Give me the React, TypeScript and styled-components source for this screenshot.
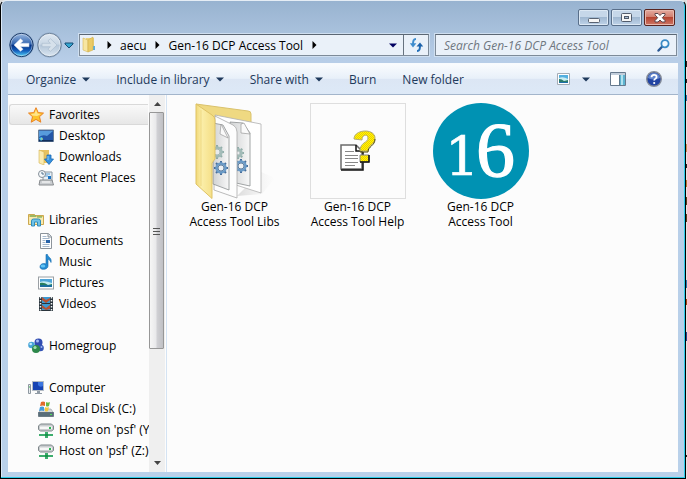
import React from "react";
import styled, { createGlobalStyle, css } from "styled-components";

const GlobalStyle = createGlobalStyle`
  *, *::before, *::after { box-sizing: border-box; }
  html, body, #root { height: 100%; }
  body { margin: 0; overflow: hidden; background: #dedede; }
  body, button, input { font-family: "Open Sans", "Noto Sans", sans-serif; font-size: 12px; }
  button { border: 0; padding: 0; margin: 0; background: none; color: inherit; }
  svg { display: block; flex: none; }
`;

/* ---------- window frame ---------- */

const Desktop = styled.div`
  height: 100%;
  display: grid;
  grid-template-columns: minmax(0, 1fr) 1px;
`;

const Backdrop = styled.div`
  background: linear-gradient(
    #e4e4e4 0 61px, #222 61px 67px, #e4e4e4 67px 79px, #222 79px 83px,
    #e4e4e4 83px 95px, #2b78ad 95px 101px, #e4e4e4 101px 144px, #c89455 144px 152px,
    #e4e4e4 152px 164px, #222 164px 168px, #e4e4e4 168px 180px, #b77c32 180px 187px,
    #e4e4e4 187px 197px, #54401a 197px 205px, #e4e4e4 205px 214px, #54401a 214px 222px,
    #e4e4e4 222px 280px, #2b78ad 280px 288px, #e4e4e4 288px 299px, #a34710 299px 305px,
    #e4e4e4 305px 332px, #24458c 332px 341px, #e4e4e4 341px 455px, #222 455px 457px, #e4e4e4 457px
  );
`;

const Frame = styled.main`
  min-width: 0;
  min-height: 0;
  display: flex;
  flex-direction: column;
  padding: 1px 7px 6px;
  border: 1px solid #000;
  border-top-color: #e5edf5;
  border-radius: 6px 6px 0 0;
  background: linear-gradient(#98b3d0, #b8cee8 60px, #b9d1ea);
  box-shadow: inset -1px -1px #2ccdea, inset 1px 0 #dbe9f7;
`;

const TitleBar = styled.header`
  height: 32px;
  display: flex;
  justify-content: flex-end;
  align-items: flex-start;
  gap: 2px;
  padding: 7px 3px 0;
`;

const Caption = styled.button<{ $danger?: boolean }>`
  width: 31px;
  height: 17px;
  display: grid;
  place-items: center;
  border: 1px solid #596f8a;
  border-radius: 2px;
  background: linear-gradient(#c6d7e9 0 45%, #a0b8d1 50%, #bfd3e9);
  box-shadow: inset 0 0 0 1px #dce8f4;
  ${(p) =>
    p.$danger &&
    css`
      border-color: #59241f;
      background: linear-gradient(#e4a99e 0, #d28071 45%, #b64431 50%, #ce7766);
      box-shadow: inset 0 0 0 1px #e9b9ae;
    `}
`;

const NavRow = styled.div`
  height: 29px;
  display: flex;
  align-items: flex-start;
  gap: 6px;
  padding-right: 1px;
`;

const History = styled.nav`
  width: 65px;
  height: 26px;
  margin-top: -2px;
  display: flex;
  align-items: center;
  gap: 1px;
`;

const RoundButton = styled.button`
  width: 27px;
  height: 26px;
`;

const SmallButton = styled.button`
  width: 12px;
  height: 24px;
  display: grid;
  place-items: center;
`;

const field = css`
  height: 22px;
  display: flex;
  align-items: center;
  background: #eaf1f9;
  border: 1px solid #7e8b99;
  border-top-color: #5b6774;
  box-shadow: 0 0 0 1px #cfdff0;
`;

const Address = styled.div`
  ${field}
  flex: 346 1 0;
  min-width: 0;
  padding-left: 2px;
`;

const Crumb = styled.button`
  height: 20px;
  white-space: nowrap;
  color: #000;
`;

const CrumbArrow = styled.span`
  width: 22px;
  display: grid;
  place-items: center;
`;

const HistoryDrop = styled.button`
  width: 20px;
  height: 20px;
  margin-left: auto;
  display: grid;
  place-items: center;
`;

const Refresh = styled.button`
  width: 25px;
  height: 20px;
  display: grid;
  place-items: center;
  border-left: 1px solid #66727f;
`;

const SearchBox = styled.label`
  ${field}
  flex: 226 1 0;
  min-width: 0;
  padding: 0 6px 0 8px;
`;

const SearchInput = styled.input`
  flex: 1;
  min-width: 0;
  border: 0;
  padding: 0;
  outline: 0;
  background: none;
  font-style: italic;
  &::placeholder { color: #6f7780; opacity: 1; }
`;

/* ---------- command bar ---------- */

const CommandBar = styled.div`
  height: 32px;
  flex: none;
  display: flex;
  align-items: center;
  gap: 26px;
  padding: 0 16px 0 18px;
  color: #1e395b;
  border-top: 1px solid #f8fbfe;
  border-bottom: 1px solid #a3b5cb;
  background: linear-gradient(#fafcfe, #e8f0f9 48%, #dce6f4 50%, #dde9f7);
`;

const Command = styled.button`
  display: flex;
  align-items: center;
  gap: 6px;
  white-space: nowrap;
`;

const ViewTools = styled.div`
  margin-left: auto;
  display: flex;
  align-items: center;
  gap: 20px;
`;

const ViewMode = styled(Command)`
  gap: 12px;
`;

/* ---------- body ---------- */

const Body = styled.div`
  flex: 1;
  min-height: 0;
  display: grid;
  grid-template-columns: 159px minmax(0, 1fr);
  grid-template-rows: minmax(0, 1fr);
  background: #fcfcfc;
`;

const Sidebar = styled.aside`
  min-height: 0;
  display: grid;
  grid-template-columns: minmax(0, 1fr) 16px;
  grid-template-rows: minmax(0, 1fr);
  padding-right: 1px;
  border-right: 1px solid #d4e3f3;
`;

const Tree = styled.nav`
  min-width: 0;
  overflow: hidden;
  padding: 9px 1px 0;
`;

const Group = styled.ul`
  list-style: none;
  margin: 0 0 21px;
  padding: 0;
`;

const Item = styled.a<{ $root?: boolean; $active?: boolean }>`
  height: 21px;
  display: flex;
  align-items: center;
  gap: 5px;
  padding-left: ${(p) => (p.$root ? 18 : 28)}px;
  border: 1px solid ${(p) => (p.$active ? "#d9d9d9" : "transparent")};
  border-right: 0;
  border-radius: 3px 0 0 3px;
  background: ${(p) => (p.$active ? "linear-gradient(#f9f9f9, #e7e7e7)" : "none")};
  color: #000;
  text-decoration: none;
  white-space: nowrap;
`;

const ScrollBar = styled.div`
  display: grid;
  grid-template-rows: 17px minmax(0, 236fr) minmax(0, 105fr) 17px;
  background: #efefef;
`;

const ScrollButton = styled.button`
  display: grid;
  place-items: center;
`;

const Thumb = styled.div`
  margin-right: 1px;
  display: grid;
  place-items: center;
  border: 1px solid #979797;
  border-radius: 1px;
  background: linear-gradient(90deg, #f6f6f6, #e9e9eb 45%, #d0d0d4 55%, #bfc0c4);
`;

const Files = styled.section`
  display: flex;
  flex-wrap: wrap;
  align-content: flex-start;
  gap: 20px;
  padding: 8px 16px;
`;

const Tile = styled.button`
  width: 103px;
  display: flex;
  flex-direction: column;
  align-items: center;
  color: #000;
  line-height: 15px;
  white-space: nowrap;
`;

const NameLine = styled.span`
  display: block;
  height: 15px;
`;

const Preview = styled.span<{ $framed?: boolean }>`
  width: 96px;
  height: 96px;
  display: grid;
  place-items: center;
  border: ${(p) => (p.$framed ? "1px solid #dedede" : "0")};
`;

/* ---------- drawings ---------- */

const Down = ({ fill = "#1e395b" }: { fill?: string }) => (
  <svg width="8" height="5" viewBox="0 0 8 5"><path d="M0 .5h8L4 4.5z" fill={fill} /></svg>
);
const Right = () => (
  <svg width="5" height="8" viewBox="0 0 5 8"><path d="M.5 0v8L4.5 4z" fill="#000" /></svg>
);

const Round = ({ forward }: { forward?: boolean }) => {
  const id = forward ? "forward" : "back";
  return (
    <svg width="27" height="26" viewBox="0 0 27 26">
      <defs>
        <linearGradient id={id} x2="0" y2="1">
          <stop stopColor={forward ? "#dfe9f2" : "#9bb9e1"} />
          <stop offset=".45" stopColor={forward ? "#c9d7e5" : "#3567b0"} />
          <stop offset=".52" stopColor={forward ? "#b6c8da" : "#063488"} />
          <stop offset=".75" stopColor={forward ? "#c6d5e4" : "#1560bd"} />
          <stop offset="1" stopColor={forward ? "#dbe7f2" : "#55d5fa"} />
        </linearGradient>
      </defs>
      <circle cx="13.5" cy="13" r="12.5" fill="#8ea8c6" />
      <circle cx="13.5" cy="13" r="11.6" fill={`url(#${id})`} stroke={forward ? "#6e8299" : "#173766"} />
      <circle cx="13.5" cy="13" r="10.7" fill="none" stroke="#fff" strokeOpacity=".4" />
      <path
        transform={forward ? "translate(27 0) scale(-1 1)" : undefined}
        d="M6 13l6.5-6.3 2.6 2.2-2.5 2.4H21v3.4h-8.4l2.5 2.5-2.6 2.1z"
        fill={forward ? "#d6e1eb" : "#fff"}
        stroke={forward ? "#a6b8cb" : "#c6d5eb"}
        strokeWidth=".6"
      />
    </svg>
  );
};

const Minimize = () => (
  <svg width="12" height="10" viewBox="0 0 12 10"><rect x=".5" y="5.5" width="11" height="4" rx="1" fill="#f6f6f6" stroke="#596372" /></svg>
);
const Maximize = () => (
  <svg width="11" height="10" viewBox="0 0 11 10">
    <rect x=".5" y=".5" width="10" height="8" rx="1" fill="#f6f6f6" stroke="#515b6b" />
    <rect x="3.5" y="3.5" width="4" height="2" fill="#a8bcd3" stroke="#515b6b" />
  </svg>
);
const Close = () => (
  <svg width="12" height="10" viewBox="0 0 12 10">
    <path d="M1 .5h3l2 2 2-2h3v1.4L8.3 4.7 11 7.6V9H8L6 7 4 9H1V7.6l2.7-2.9L1 1.9z" fill="#fff" stroke="#5c474d" />
  </svg>
);

const FolderSmall = () => (
  <svg width="16" height="18" viewBox="0 0 16 18">
    <path d="M4 2h8v12H4z" fill="#ead37c" /><path d="M11 10h2v4h-2z" fill="#55aee3" />
    <path d="M1 2l5 2v12l-5-2z" fill="#f7e6a2" stroke="#d6b758" strokeWidth=".6" />
    <path d="M6 4l5-3v13l-5 2z" fill="#eacb66" stroke="#d2b04d" strokeWidth=".6" />
  </svg>
);

const RefreshIcon = () => (
  <svg width="15" height="14" viewBox="0 0 15 14" fill="none" stroke="#236fb8">
    <path d="M7 1C4.500 1 4 2.500 4 7" strokeWidth="2" stroke="#3e8ccd" /><path d="M.8 5.200h6.600L4 9.400z" fill="#3e8ccd" stroke="none" />
    <path d="M8 13c2.500 0 3-1.500 3-6" strokeWidth="2" /><path d="M7.500 8.500h6.700L11 4.600z" fill="#1d62aa" stroke="none" />
  </svg>
);

const Magnifier = () => (
  <svg width="13" height="13" viewBox="0 0 13 13" fill="none">
    <path d="M1.500 11.500l4-4.300" stroke="#2b5994" strokeWidth="2.400" strokeLinecap="round" />
    <circle cx="8" cy="4.700" r="3.600" stroke="#398ac5" strokeWidth="1.800" fill="#f2f9fe" />
  </svg>
);

const PictureIcon = () => (
  <svg width="16" height="14" viewBox="0 0 16 14">
    <rect x=".5" y="1" width="15" height="12" fill="#fff" stroke="#9a9fa4" />
    <path d="M2 3h12v8H2z" fill="#4fa5d8" /><path d="M2 6q4-2 12 1v4H2z" fill="#c2ebef" />
    <path d="M2 7q4-1 8 2l4-1v3H2z" fill="#277d5b" /><path d="M2 9h12v2H2z" fill="#1b6e9d" />
  </svg>
);
const ViewIcon = () => (
  <svg width="13" height="12" viewBox="0 0 13 12">
    <path d="M.5.5h12v11H.5z" fill="#fff" stroke="#a4acb5" /><path d="M2 2h9v4H2z" fill="#53afe0" />
    <path d="M2 5q4-2 9 1v4H2z" fill="#c9edf2" /><path d="M2 6q3 0 5 2l4-1v3H2z" fill="#2b7b69" /><path d="M2 9h9v1H2z" fill="#1e6fab" />
  </svg>
);
const PaneIcon = () => (
  <svg width="16" height="14" viewBox="0 0 16 14">
    <path d="M.5.5h15v13H.5z" fill="#fff" stroke="#66798d" /><path d="M1 1h14v2H1z" fill="#c2cedb" />
    <path d="M10 3h5v10h-5z" fill="#5db3d0" /><path d="M11 3h2v10h-2z" fill="#b1e2ef" /><path d="M9.500 3v10" stroke="#5b798e" />
  </svg>
);
const HelpIcon = () => (
  <svg width="16" height="16" viewBox="0 0 16 16">
    <circle cx="8" cy="8" r="7.300" fill="#2143a2" stroke="#858c99" strokeWidth="1.400" />
    <path d="M2 7a6 5 0 0 1 12 0Q8 10 2 7z" fill="#6286cd" />
    <path d="M5.500 6.300C5.500 3 10.600 3 10.600 6c0 1.700-2.400 1.600-2.400 3.500" fill="none" stroke="#fff" strokeWidth="1.800" />
    <circle cx="8.200" cy="12" r="1.100" fill="#fff" />
  </svg>
);

const Star = () => (
  <svg width="16" height="16" viewBox="0 0 16 16">
    <path d="M8 .7l2.200 4.900 5.300.5-4 3.600 1.300 5.500L8 12.400l-4.800 2.800 1.300-5.500-4-3.600 5.300-.5z" fill="#fcc42c" stroke="#eb8224" />
    <path d="M8 2.500l1.500 4 3.500.5-4 2-5-.5-1-1.500 3.500-.5z" fill="#ffe58a" />
  </svg>
);
const DesktopIcon = () => (
  <svg width="16" height="14" viewBox="0 0 16 14">
    <path d="M.5 1h15v11.500H.5z" fill="#2356a8" stroke="#697f98" /><path d="M1 2h14L9 7Q5 5 1 8z" fill="#579bdc" />
    <path d="M1 11h14v1.500H1z" fill="#102e5c" /><path d="M1 9l3-1 1 2-2 2z" fill="#49c4ed" /><path d="M3 9l2 1-1 1z" fill="#f8da40" />
  </svg>
);
const DownloadsIcon = () => (
  <svg width="16" height="16" viewBox="0 0 16 16">
    <path d="M1 1h10v13H1z" fill="#e6c260" /><path d="M1 1l5 2v13l-5-2z" fill="#faebb0" stroke="#d5b152" strokeWidth=".6" />
    <path d="M9 6h4v4h2.500L11 15.500 6.500 10H9z" fill="#3792df" stroke="#1768b4" strokeWidth=".8" /><path d="M10 7v4" stroke="#8bd0fb" />
  </svg>
);
const RecentIcon = () => (
  <svg width="16" height="16" viewBox="0 0 16 16">
    <path d="M5 2h9v9H5z" fill="#e8f0f7" stroke="#8a969f" /><path d="M7 4h5M7 6h3" stroke="#5e9fd0" />
    <path d="M10 6h3v3h-3z" fill="#1d74c4" /><path d="M2 10h12l1.500 5H1z" fill="#cbced1" stroke="#878b8e" /><path d="M4 12h8" stroke="#fff" />
    <circle cx="4" cy="4" r="3.500" fill="#f3f7fa" stroke="#858f98" /><path d="M4 2v2h2" fill="none" stroke="#53738d" />
  </svg>
);
const LibrariesIcon = () => (
  <svg width="16" height="16" viewBox="0 0 16 16">
    <path d="M.5 2.500h6l1 1h8v9H.5z" fill="#e5c968" stroke="#cba851" /><path d="M1 5h14v7H1z" fill="#faeaad" />
    <path d="M2 4h6M9 5h5" stroke="#56a85c" /><path d="M3.500 14V9q0-2 2-2h5q2 0 2 2v5h-3v-4h-3v4z" fill="#70c2e8" stroke="#318dbb" />
  </svg>
);
const DocumentIcon = () => (
  <svg width="16" height="16" viewBox="0 0 16 16">
    <path d="M2.500.5h8l3 3v12h-11z" fill="#fff" stroke="#8d949b" /><path d="M10 .5v3.500h3.500" fill="#dae3ec" stroke="#8d949b" />
    <path d="M4.500 3.500h4M4.500 5.500h7M4.500 7.500h3M4.500 9.500h3M4.500 11.500h7M4.500 13.500h7" stroke="#a5b8cc" /><path d="M8 7h4v3H8z" fill="#2763a9" />
  </svg>
);
const MusicIcon = () => (
  <svg width="16" height="16" viewBox="0 0 16 16">
    <path d="M8 .5h1.500c.5 3 4.500 3 3.500 8-.8-2-1.700-3-3-3.300V12c0 4-8 4.500-8 1 0-3 3-4.200 6-3z" fill="#258bd2" stroke="#146aad" strokeWidth=".6" />
    <ellipse cx="5" cy="12" rx="2.300" ry="1.500" fill="#62c4f5" />
  </svg>
);
const VideoIcon = () => (
  <svg width="16" height="16" viewBox="0 0 16 16">
    <path d="M1 1h14v14H1z" fill="#29333b" /><path d="M4 1h8v6H4zM4 8h8v6H4z" fill="#3b99d3" />
    <path d="M4 1l4 3 4-2v2L8 7 4 4zM4 9l4 3 4-3v4l-4 1-4-2z" fill="#b65133" /><path d="M2.500 1v14M13.500 1v14" stroke="#eef2f4" strokeWidth="1.500" strokeDasharray="1.500 1.500" />
  </svg>
);
const HomegroupIcon = () => (
  <svg width="16" height="16" viewBox="0 0 16 16">
    <circle cx="10.500" cy="4.500" r="4" fill="#314cb1" /><circle cx="3.500" cy="7" r="3.300" fill="#45a4d7" />
    <circle cx="12.500" cy="10" r="3.300" fill="#3454b5" /><circle cx="8" cy="11" r="4" fill="#2d884a" />
    <circle cx="9.500" cy="3" r="1.500" fill="#a5bbf5" /><circle cx="2.700" cy="6" r="1.300" fill="#c1eafa" />
    <circle cx="7" cy="9.500" r="1.600" fill="#a0dfab" /><circle cx="13.500" cy="9" r="1" fill="#9fb4ee" />
  </svg>
);
const ComputerIcon = () => (
  <svg width="16" height="16" viewBox="0 0 16 16">
    <path d="M4.500 1.500h11v9h-11z" fill="#1743b3" stroke="#b3bbc3" /><path d="M10 2h5v4q-3 2-5-1z" fill="#3c75df" />
    <path d="M9 11h3v2h2v1H7v-1h2z" fill="#919ba5" /><path d="M.5 4.500h2v9h-2z" fill="#e9edf0" stroke="#8e98a0" /><path d="M1 7h1" stroke="#38b649" />
  </svg>
);
const DiskIcon = () => (
  <svg width="16" height="16" viewBox="0 0 16 16">
    <path d="M3 8h10l2.500 4H.5z" fill="#d4d8db" stroke="#949ba1" strokeWidth=".6" /><path d="M.5 11.500h15v4H.5z" fill="#596e7a" stroke="#425561" strokeWidth=".6" />
    <path d="M3 1q2-1 4 0v4Q5 4 2 5z" fill="#e16b2c" /><path d="M8 1q2 1 4 0l-1 4q-2 1-3 0z" fill="#68b944" />
    <path d="M2 6q2-1 4 0v4Q4 9 1 10z" fill="#439bda" /><path d="M7 6q2 1 4 0l-1 4q-2 1-3 0z" fill="#f3c73b" /><path d="M12 13.500h2" stroke="#50e05a" />
  </svg>
);
const NetworkDisk = () => (
  <svg width="16" height="16" viewBox="0 0 16 16">
    <path d="M.5 4l2-2h11l2 2v3.500l-2 1.500h-11l-2-1.500z" fill="#c9cdcf" stroke="#7f878b" /><path d="M2 4.500h12v2.500H2z" fill="#f6f7f7" />
    <path d="M11 6h2" stroke="#29b553" strokeWidth="2" /><path d="M7 10h3v2h5v2h-5v2H7v-2H1v-2h6z" fill="#3dad6d" /><path d="M7 12h3v2H7z" fill="#19914c" />
  </svg>
);

const gearTeeth = [0, 45, 90, 135, 180, 225, 270, 315];
const Gear = ({ x, y, r, faded }: { x: number; y: number; r: number; faded?: boolean }) => (
  <g transform={`translate(${x} ${y})`} opacity={faded ? 0.7 : 1}>
    {gearTeeth.map((a) => <path key={a} transform={`rotate(${a})`} d={`M-1 ${-r + 1}v-2h2v2z`} fill={faded ? "#6f9690" : "#486f9b"} />)}
    <circle r={r - 1.500} fill="none" stroke={faded ? "#86aaa5" : "#6a9bc7"} strokeWidth="2.500" />
    <circle r={r - 3} fill="#eef1f3" stroke={faded ? "#789994" : "#42688f"} strokeWidth=".8" />
  </g>
);

const FolderLarge = () => (
  <svg width="96" height="96" viewBox="0 0 96 96">
    <defs>
      <linearGradient id="flap"><stop stopColor="#f1d979" /><stop offset=".3" stopColor="#fbeea9" /><stop offset="1" stopColor="#f3dc80" /></linearGradient>
      <linearGradient id="sheet"><stop stopColor="#d0d2d3" /><stop offset="1" stopColor="#f8f8f8" /></linearGradient>
      <linearGradient id="shade"><stop stopColor="#bbb" stopOpacity=".5" /><stop offset="1" stopColor="#ddd" stopOpacity="0" /></linearGradient>
    </defs>
    <path d="M50 93l25-2 13-16-14-6z" fill="url(#shade)" />
    <path d="M9 1l52 7q3 0 3 3v9L28 16z" fill="#efd982" stroke="#dac26c" />
    <path d="M28 12l46 9v69l-25-8z" fill="#fff" stroke="#b0b0b0" strokeWidth=".8" />
    <path d="M43 19l13 1 7 10v53l-14-3z" fill="url(#sheet)" stroke="#8b8f91" strokeWidth=".8" />
    <path d="M54 21v9l9 1-6-11z" fill="#fafafa" stroke="#999" strokeWidth=".7" />
    <Gear x={51} y={50} r={5} faded /><Gear x={54} y={63} r={6} />
    <path d="M28 13l18 9q4 2 4 7v66l-23-8z" fill="#fdfdfd" stroke="#aaa" strokeWidth=".8" />
    <path d="M26 20l10 2 6 11v54l-16-6z" fill="url(#sheet)" stroke="#8b8f91" strokeWidth=".8" />
    <path d="M34 21l-1 10 8 4z" fill="#fafafa" stroke="#999" strokeWidth=".7" />
    <Gear x={30} y={49} r={6} faded /><Gear x={34} y={65} r={6} />
    <path d="M9 1l16 11q3 2 3 5v39l-3 4v35.500L9 81z" fill="url(#flap)" stroke="#dfc365" />
    <path d="M14 7v76" stroke="#e8cf72" strokeWidth="1" opacity=".6" />
  </svg>
);

const HelpFile = () => (
  <svg width="36" height="42" viewBox="0 0 36 42">
    <defs><pattern id="dither" width="2" height="2" patternUnits="userSpaceOnUse"><path d="M0 0h2v2H0z" fill="#ff0" /><path d="M0 0h1v1H0zM1 1h1v1H1z" fill="#efc500" /></pattern></defs>
    <path d="M1 15h15l6 6v18H1z" fill="#fff" stroke="#6b6b6b" strokeWidth="1.500" /><path d="M16 15v6h6M1 40h22V22" fill="none" stroke="#111" strokeWidth="1.500" />
    <path d="M5 21.500h9M5 25.500h13M5 28.500h13M5 32.500h13M5 35.500h10" stroke="#888" />
    <path d="M14 9c0-10 21-11 21-1 0 7-7 7-7 13h-8c0-9 8-8 8-13 0-4-6-4-6 2z" fill="url(#dither)" stroke="#b3ad70" />
    <path d="M20 22h8c0-6 7-6 7-13" fill="none" stroke="#514900" /><path d="M20 25h9v7h-9z" fill="url(#dither)" stroke="#888" /><path d="M20 32h9v-7" fill="none" stroke="#111" strokeWidth="1.500" />
  </svg>
);

const SixteenLogo = () => (
  <svg width="96" height="96" viewBox="0 0 96 96" fill="#fff" stroke="#fff">
    <circle cx="48" cy="48" r="48" fill="#0092b3" stroke="none" />
    <text x="12" y="73" fontFamily="DejaVu Serif" fontSize="54" strokeWidth=".6">1</text>
    <text x="43" y="73" fontFamily="Liberation Serif" fontSize="78" strokeWidth="1.200">6</text>
  </svg>
);

/* ---------- data ---------- */

type Entry = { label: string; icon: React.FC };
const groups: { root: Entry; children: Entry[] }[] = [
  { root: { label: "Favorites", icon: Star }, children: [
    { label: "Desktop", icon: DesktopIcon }, { label: "Downloads", icon: DownloadsIcon }, { label: "Recent Places", icon: RecentIcon } ] },
  { root: { label: "Libraries", icon: LibrariesIcon }, children: [
    { label: "Documents", icon: DocumentIcon }, { label: "Music", icon: MusicIcon }, { label: "Pictures", icon: PictureIcon }, { label: "Videos", icon: VideoIcon } ] },
  { root: { label: "Homegroup", icon: HomegroupIcon }, children: [] },
  { root: { label: "Computer", icon: ComputerIcon }, children: [
    { label: "Local Disk (C:)", icon: DiskIcon }, { label: "Home on 'psf' (Y", icon: NetworkDisk }, { label: "Host on 'psf' (Z:)", icon: NetworkDisk } ] },
];
const files = [
  { lines: ["Gen-16 DCP", "Access Tool Libs"], icon: FolderLarge },
  { lines: ["Gen-16 DCP", "Access Tool Help"], icon: HelpFile, framed: true },
  { lines: ["Gen-16 DCP", "Access Tool"], icon: SixteenLogo },
];
const commands = [
  { label: "Organize", menu: true }, { label: "Include in library", menu: true },
  { label: "Share with", menu: true }, { label: "Burn" }, { label: "New folder" },
];

export default function App() {
  return (
    <Desktop>
      <GlobalStyle />
      <Frame>
        <TitleBar>
          <Caption aria-label="Minimize"><Minimize /></Caption>
          <Caption aria-label="Maximize"><Maximize /></Caption>
          <Caption $danger aria-label="Close"><Close /></Caption>
        </TitleBar>
        <NavRow>
          <History aria-label="History">
            <RoundButton aria-label="Back"><Round /></RoundButton>
            <RoundButton aria-label="Forward"><Round forward /></RoundButton>
            <SmallButton aria-label="Recent pages">
              <svg width="10" height="7" viewBox="0 0 10 7"><path d="M1 1h8v1L5 6 1 2z" fill="#35a6d0" stroke="#164c75" /></svg>
            </SmallButton>
          </History>
          <Address>
            <FolderSmall />
            <CrumbArrow><Right /></CrumbArrow>
            <Crumb>aecu</Crumb>
            <CrumbArrow><Right /></CrumbArrow>
            <Crumb>Gen-16 DCP Access Tool</Crumb>
            <CrumbArrow><Right /></CrumbArrow>
            <HistoryDrop aria-label="Previous locations"><Down fill="#000060" /></HistoryDrop>
            <Refresh aria-label="Refresh"><RefreshIcon /></Refresh>
          </Address>
          <SearchBox>
            <SearchInput aria-label="Search" placeholder="Search Gen-16 DCP Access Tool" />
            <Magnifier />
          </SearchBox>
        </NavRow>
        <CommandBar>
          {commands.map((c) => <Command key={c.label}>{c.label}{c.menu && <Down />}</Command>)}
          <ViewTools>
            <ViewMode aria-label="Change your view"><ViewIcon /><Down /></ViewMode>
            <Command aria-label="Show the preview pane"><PaneIcon /></Command>
            <Command aria-label="Help"><HelpIcon /></Command>
          </ViewTools>
        </CommandBar>
        <Body>
          <Sidebar>
            <Tree aria-label="Locations">
              {groups.map(({ root, children }, index) => (
                <Group key={root.label}>
                  <li><Item href="#" $root $active={index === 0}><root.icon />{root.label}</Item></li>
                  {children.map((c) => <li key={c.label}><Item href="#"><c.icon />{c.label}</Item></li>)}
                </Group>
              ))}
            </Tree>
            <ScrollBar>
              <ScrollButton aria-label="Scroll up"><svg width="7" height="4" viewBox="0 0 7 4"><path d="M0 4L3.500 0 7 4z" fill="#444" /></svg></ScrollButton>
              <Thumb><svg width="7" height="8" viewBox="0 0 7 8"><path d="M0 1.500h7M0 4.500h7M0 7.500h7" stroke="#555" /></svg></Thumb>
              <span />
              <ScrollButton aria-label="Scroll down"><svg width="7" height="4" viewBox="0 0 7 4"><path d="M0 0h7L3.500 4z" fill="#444" /></svg></ScrollButton>
            </ScrollBar>
          </Sidebar>
          <Files>
            {files.map((f) => (
              <Tile key={f.lines.join(" ")}>
                <Preview $framed={f.framed}><f.icon /></Preview>
                <NameLine>{f.lines[0]}</NameLine>
                <NameLine>{f.lines[1]}</NameLine>
              </Tile>
            ))}
          </Files>
        </Body>
      </Frame>
      <Backdrop />
    </Desktop>
  );
}
